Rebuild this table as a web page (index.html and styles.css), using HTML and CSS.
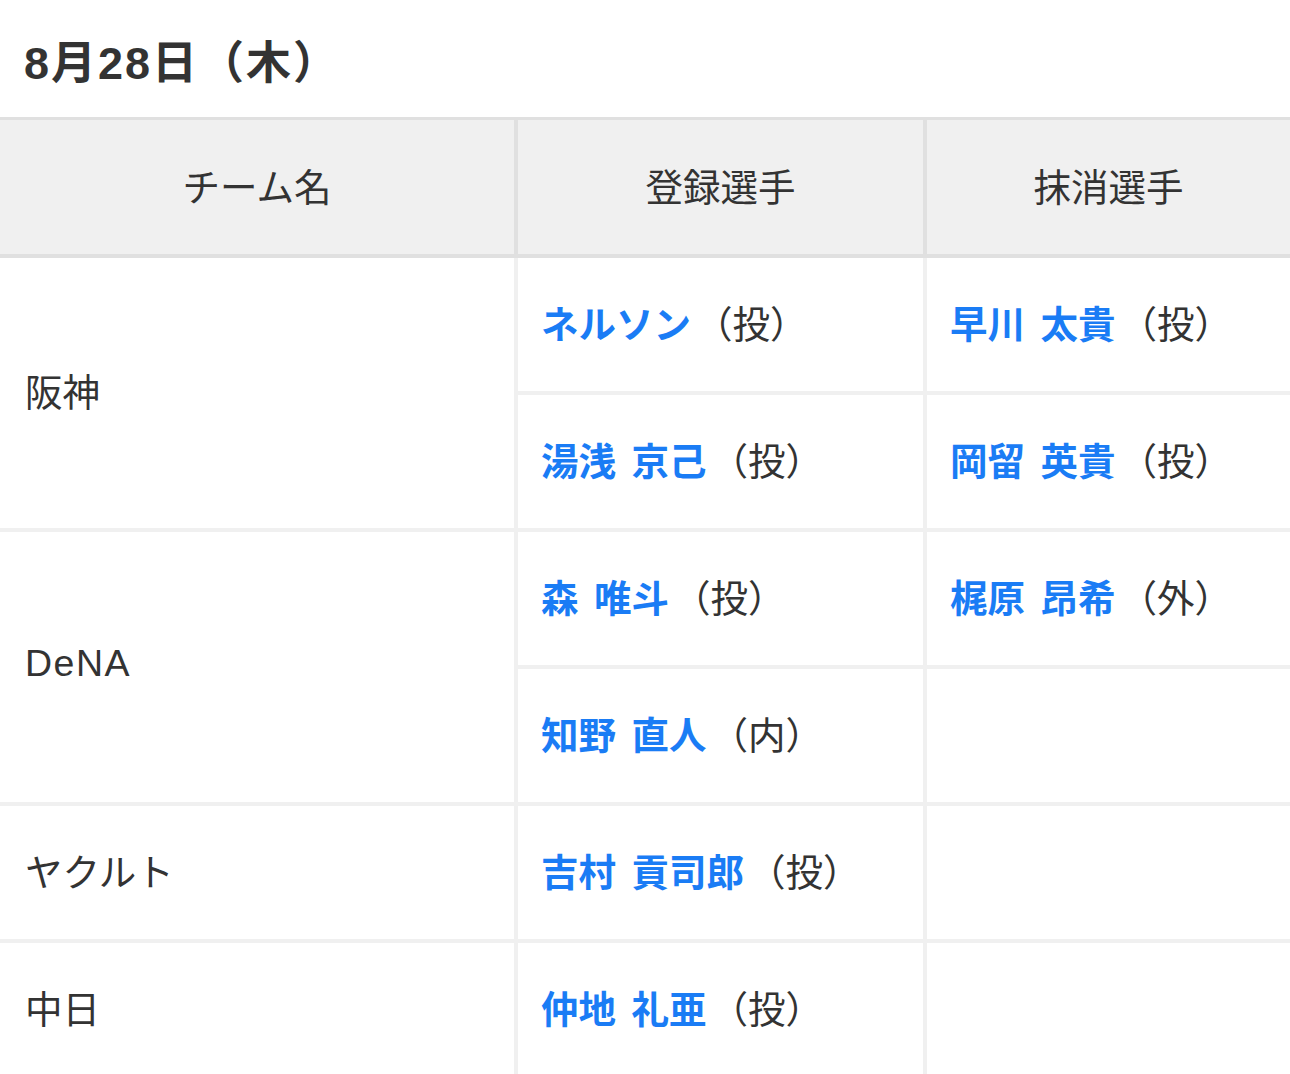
FILE: index.html
```html
<!DOCTYPE html>
<html lang="ja">
<head>
<meta charset="utf-8">
<title>出場選手登録・抹消</title>
<link rel="stylesheet" href="styles.css">
</head>
<body>
<h1 class="date">8月28日（木）</h1>
<div class="table">
  <div class="head">
    <div class="hcell">チーム名</div>
    <div class="hcell">登録選手</div>
    <div class="hcell">抹消選手</div>
  </div>
  <div class="body">
    <div class="cell team span2">阪神</div>
    <div class="cell"><a class="name">ネルソン</a><span class="pos">（投）</span></div>
    <div class="cell"><a class="name">早川 太貴</a><span class="pos">（投）</span></div>
    <div class="cell"><a class="name">湯浅 京己</a><span class="pos">（投）</span></div>
    <div class="cell"><a class="name">岡留 英貴</a><span class="pos">（投）</span></div>

    <div class="cell team span2"><span class="latin">DeNA</span></div>
    <div class="cell"><a class="name">森 唯斗</a><span class="pos">（投）</span></div>
    <div class="cell"><a class="name">梶原 昂希</a><span class="pos">（外）</span></div>
    <div class="cell"><a class="name">知野 直人</a><span class="pos">（内）</span></div>
    <div class="cell"></div>

    <div class="cell team">ヤクルト</div>
    <div class="cell"><a class="name">吉村 貢司郎</a><span class="pos">（投）</span></div>
    <div class="cell"></div>

    <div class="cell team">中日</div>
    <div class="cell"><a class="name">仲地 礼亜</a><span class="pos">（投）</span></div>
    <div class="cell"></div>
  </div>
</div>
</body>
</html>
```
FILE: styles.css
```css
html, body {
  margin: 0;
  padding: 0;
  background: #fff;
}
body {
  font-family: "Liberation Sans", "Noto Sans CJK JP", sans-serif;
  color: #333;
  width: 1290px;
  overflow: hidden;
}
.date {
  margin: 0;
  padding: 42px 24px 31px;
  font-size: 45px;
  line-height: 44px;
  letter-spacing: 2px;
  font-weight: bold;
  color: #333;
}
.table {
  width: 1290px;
}
.head {
  display: grid;
  grid-template-columns: 514px 405px 1fr;
  column-gap: 4px;
  background: #e0e0e0;
  border-top: 3px solid #e0e0e0;
  border-bottom: 4px solid #e0e0e0;
}
.hcell {
  background: #f0f0f0;
  height: 134px;
  box-sizing: border-box;
  padding-bottom: 6px;
  display: flex;
  align-items: center;
  justify-content: center;
  font-size: 37.5px;
  color: #333;
}
.body {
  display: grid;
  grid-template-columns: 514px 405px 1fr;
  grid-auto-rows: 133px;
  gap: 4px;
  background: #f0f0f0;
}
.cell {
  background: #fff;
  display: flex;
  align-items: center;
  padding: 0 24px 7px 23px;
  font-size: 37.5px;
  white-space: nowrap;
}
.team {
  padding-left: 25px;
}
.latin {
  letter-spacing: 1.5px;
}
.span2 {
  grid-row: span 2;
}
.name {
  color: #1a7cf5;
  font-weight: bold;
  text-decoration: none;
  word-spacing: 5px;
}
.pos {
  color: #333;
  margin-left: 4px;
}
```
